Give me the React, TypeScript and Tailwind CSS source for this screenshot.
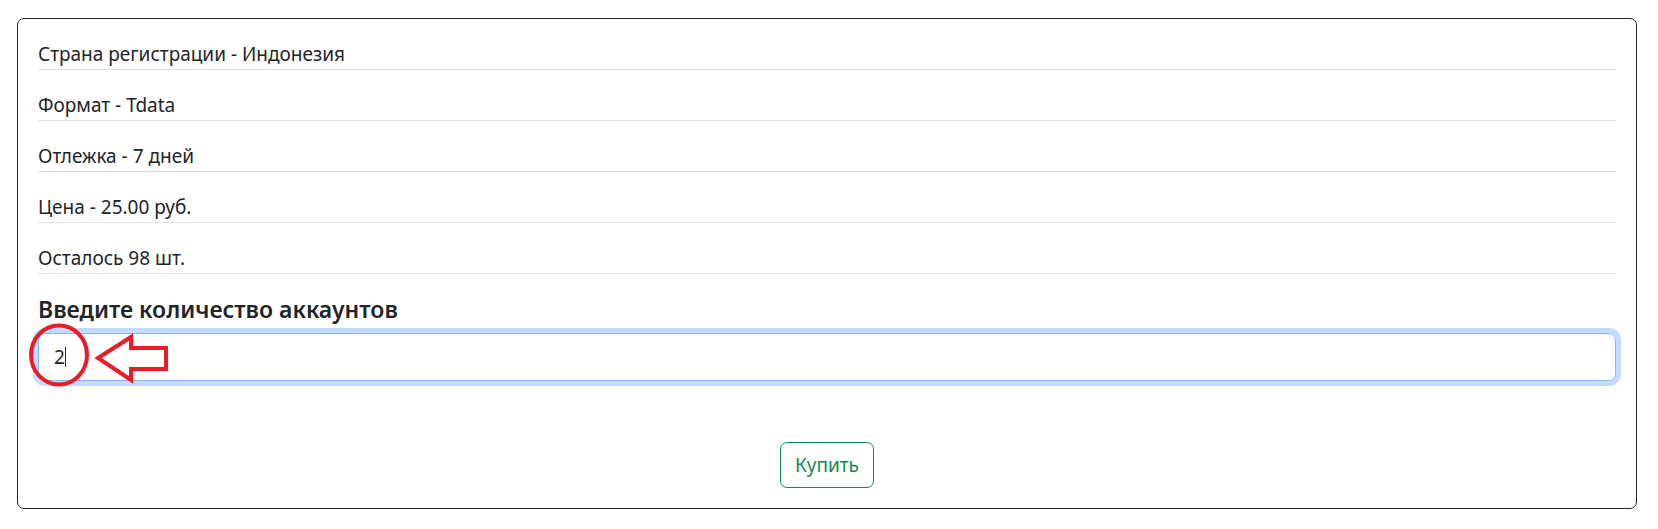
export default function App() {
  const rows = [
    "Страна регистрации - Индонезия",
    "Формат - Tdata",
    "Отлежка - 7 дней",
    "Цена - 25.00 руб.",
    "Осталось 98 шт.",
  ];

  return (
    <div
      className="relative w-[1658px] h-[529px] bg-white text-[#212529]"
      style={{ fontFamily: '"Noto Sans", "Open Sans", sans-serif' }}
    >
      <div className="absolute left-0 top-0 pl-[17px] pt-[18px]">
        <div className="w-[1620px] h-[491px] border border-[#212529] rounded-[7px] p-[20px]">
          {rows.map((r) => (
            <p key={r} className="text-[19px] leading-[30px] border-b border-[#dee2e6] mb-[20px]">
              {r}
            </p>
          ))}
          <h5 className="text-[23px] leading-[30px] font-semibold mb-[9px]">Введите количество аккаунтов</h5>
          <div className="h-[48px] border border-[#86b7fe] rounded-[7px] shadow-[0_0_0_5px_rgba(13,110,253,0.25)] px-[15px] flex items-center text-[19px]">
            <span>2</span>
            <span className="inline-block w-px h-[20px] bg-[#212529]"></span>
          </div>
          <div className="flex justify-center mt-[61px]">
            <button className="w-[94px] h-[46px] border border-[#198754] rounded-[7px] text-[#198754] text-[19px] leading-[30px]">
              Купить
            </button>
          </div>
        </div>
      </div>

      {/* пометка красным */}
      <svg className="absolute left-0 top-0" width="200" height="400" viewBox="0 0 200 400">
        <ellipse cx="59" cy="355" rx="28" ry="29.5" fill="none" stroke="#ed1c24" strokeWidth="4" />
        <polygon
          points="98,358 131,337 131,348 166,348 166,369 131,369 131,380"
          fill="none"
          stroke="#ed1c24"
          strokeWidth="4"
          strokeLinejoin="miter"
        />
      </svg>
    </div>
  );
}
